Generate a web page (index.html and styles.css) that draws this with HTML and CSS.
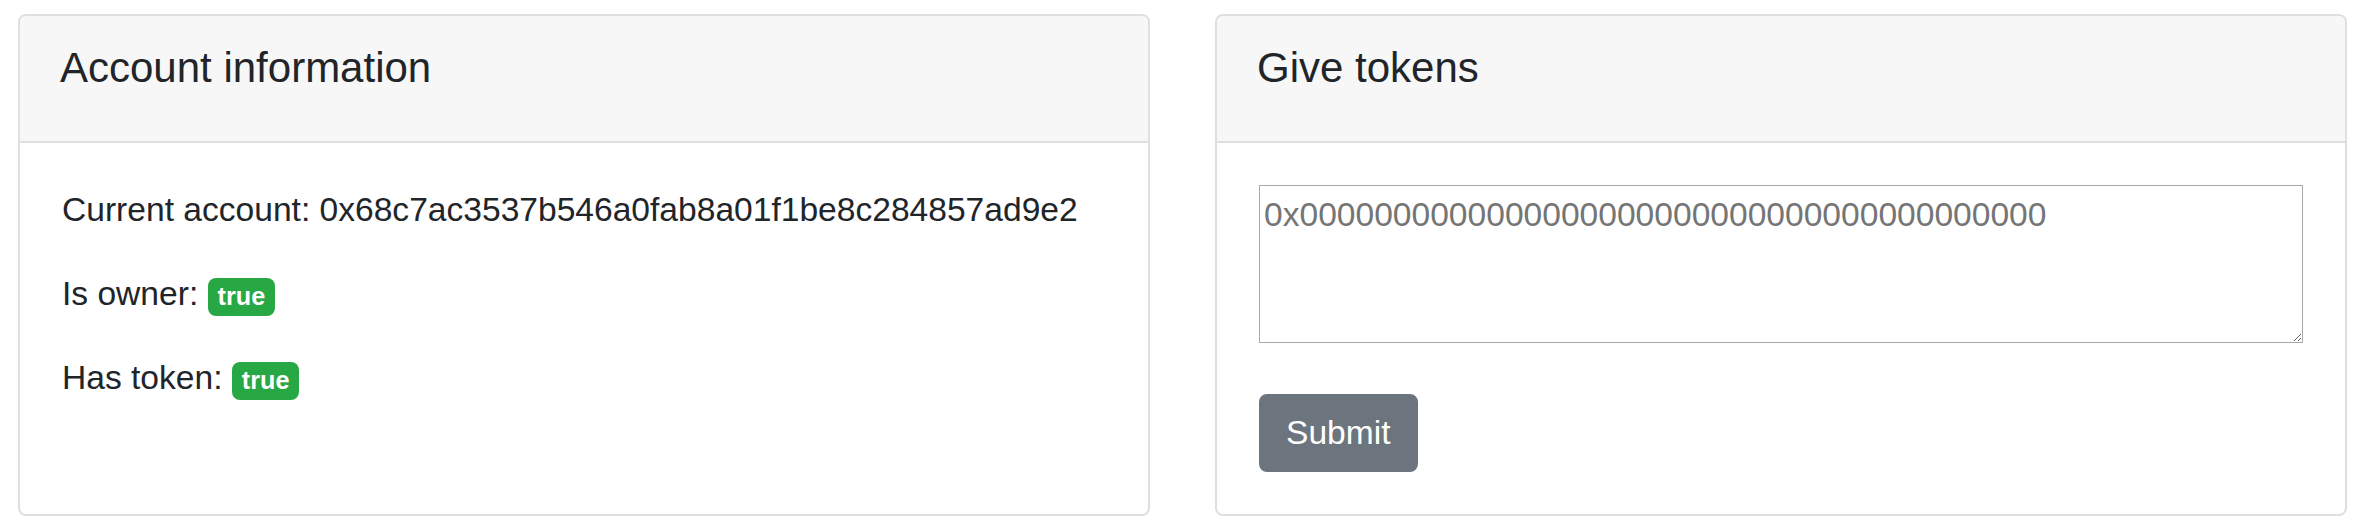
FILE: index.html
```html
<!DOCTYPE html>
<html lang="en">
<head>
<meta charset="utf-8">
<title>Tokens</title>
<link rel="stylesheet" href="styles.css">
</head>
<body>
<main class="row">
  <section class="card">
    <header class="card-header"><h5 class="card-title">Account information</h5></header>
    <div class="card-body">
      <p class="line">Current account: 0x68c7ac3537b546a0fab8a01f1be8c284857ad9e2</p>
      <p class="line">Is owner: <span class="badge">true</span></p>
      <p class="line">Has token: <span class="badge">true</span></p>
    </div>
  </section>
  <section class="card">
    <header class="card-header"><h5 class="card-title">Give tokens</h5></header>
    <div class="card-body">
      <form class="form">
        <textarea class="address" placeholder="0x0000000000000000000000000000000000000000"></textarea>
        <button type="button" class="btn">Submit</button>
      </form>
    </div>
  </section>
</main>
</body>
</html>
```
FILE: styles.css
```css
* { box-sizing: border-box; }
html, body { margin: 0; padding: 0; background: #fff; }
body {
  font-family: "Liberation Sans", Arial, sans-serif;
  color: #212529;
  font-size: 33.6px;
}
.row {
  display: flex;
  gap: 65px;
  padding: 14px 12px 0 18px;
  align-items: stretch;
}
.card {
  flex: 0 0 1132px;
  width: 1132px;
  height: 502px;
  display: flex;
  flex-direction: column;
  border: 2px solid #dfdfdf;
  border-radius: 8px;
  background: #fff;
  overflow: hidden;
}
.card-header {
  background: #f7f7f7;
  border-bottom: 2px solid #dfdfdf;
  padding: 27px 40px 0 40px;
  height: 127px;
}
.card-title {
  margin: 0;
  font-size: 42px;
  font-weight: 400;
  line-height: 50px;
}
.card-body {
  flex: 1;
  padding: 42px 42px 42px 42px;
}
.line {
  margin: 0 0 34px 0;
  line-height: 50px;
}
.badge {
  display: inline-block;
  font-size: 25.2px;
  font-weight: 700;
  line-height: 1;
  padding: 6.3px 10px;
  color: #fff;
  background: #28a745;
  border-radius: 8px;
  vertical-align: baseline;
}
.form {
  display: flex;
  flex-direction: column;
  align-items: flex-start;
  gap: 51px;
}
.address {
  display: block;
  width: 100%;
  height: 158px;
  margin: 0;
  padding: 4px;
  border: 1px solid #a9a9a9;
  font-family: inherit;
  font-size: 33.6px;
  line-height: 50px;
  color: #212529;
  background: #fff;
}
.address::placeholder { color: #757575; opacity: 1; }
.btn {
  margin: 0;
  font-family: inherit;
  font-size: 33.6px;
  line-height: 50px;
  height: 78px;
  padding: 12px 25px;
  color: #fff;
  background: #6c757d;
  border: 2px solid #6c757d;
  border-radius: 8px;
}
```
